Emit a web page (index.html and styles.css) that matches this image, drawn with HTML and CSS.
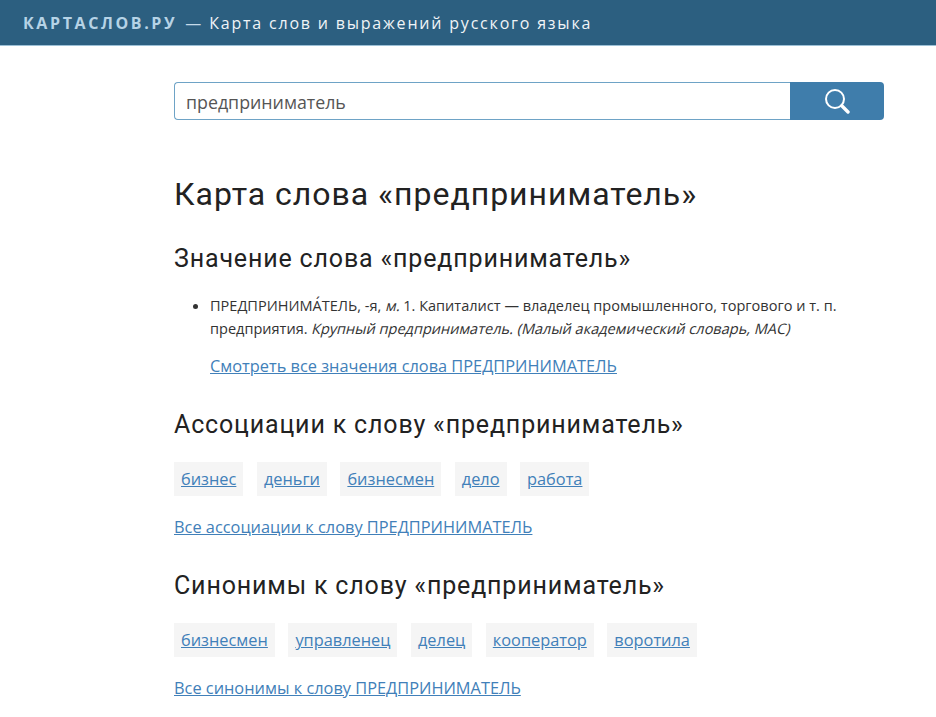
FILE: index.html
```html
<!DOCTYPE html>
<html lang="ru">
<head>
<meta charset="utf-8">
<title>Карта слова «предприниматель»</title>
<link rel="stylesheet" href="styles.css">
</head>
<body>
<header class="topbar">
  <a class="brand" href="#">КАРТАСЛОВ.РУ</a>
  <span class="dash">—</span>
  <span class="tagline">Карта слов и выражений русского языка</span>
</header>
<main class="content">
  <form class="search">
    <div class="search-input">предприниматель</div>
    <button class="search-btn" type="button" aria-label="Поиск">
      <svg class="search-icon" viewBox="0 0 26 26" width="26" height="26">
        <circle cx="11" cy="11" r="9" fill="none" stroke="#fff" stroke-width="2"/>
        <path d="M17.8 17.8 L24 24" fill="none" stroke="#fff" stroke-width="3.4" stroke-linecap="round"/>
      </svg>
    </button>
  </form>
  <h1 class="title">Карта слова «предприниматель»</h1>
  <section>
    <h2 class="heading first">Значение слова «предприниматель»</h2>
    <ul class="meanings">
      <li>ПРЕДПРИНИМА́ТЕЛЬ, -я, <span class="em">м.</span> 1. Капиталист — владелец промышленного, торгового и т. п. предприятия. <span class="em">Крупный предприниматель. (Малый академический словарь, МАС)</span></li>
    </ul>
    <a class="more indented" href="#">Смотреть все значения слова ПРЕДПРИНИМАТЕЛЬ</a>
  </section>
  <section>
    <h2 class="heading">Ассоциации к слову «предприниматель»</h2>
    <div class="tags">
      <a class="tag" href="#">бизнес</a><a class="tag" href="#">деньги</a><a class="tag" href="#">бизнесмен</a><a class="tag" href="#">дело</a><a class="tag" href="#">работа</a>
    </div>
    <a class="more" href="#">Все ассоциации к слову ПРЕДПРИНИМАТЕЛЬ</a>
  </section>
  <section>
    <h2 class="heading">Синонимы к слову «предприниматель»</h2>
    <div class="tags">
      <a class="tag" href="#">бизнесмен</a><a class="tag" href="#">управленец</a><a class="tag" href="#">делец</a><a class="tag" href="#">кооператор</a><a class="tag" href="#">воротила</a>
    </div>
    <a class="more" href="#">Все синонимы к слову ПРЕДПРИНИМАТЕЛЬ</a>
  </section>
</main>
</body>
</html>
```
FILE: styles.css
```css
html, body { margin: 0; padding: 0; }
body {
  font-family: "Open Sans", "Noto Sans", sans-serif;
  color: #222;
  background: #fff;
  overflow: hidden;
  height: 717px;
}
.topbar {
  height: 46px;
  box-sizing: border-box;
  background: #2c5f80;
  border-bottom: 1px solid #9cc0d6;
  padding: 1px 0 0 23px;
  display: flex;
  align-items: center;
  gap: 8px;
  font-size: 16px;
  color: #dfeaf2;
}
.brand { color: #b6d3e6; font-weight: 700; text-decoration: none; letter-spacing: 2.6px; }
.dash { color: #c5dae8; }
.tagline { color: #f0f4f7; letter-spacing: 1.8px; }
.content { padding: 36px 52px 0 174px; }
.search { display: flex; height: 38px; }
.search-input {
  flex: 1;
  box-sizing: border-box;
  border: 1px solid #6ea3c6;
  border-right: 0;
  border-radius: 4px 0 0 4px;
  padding-left: 11px;
  font-size: 17.8px;
  line-height: 39px;
  color: #555;
}
.search-btn {
  width: 94px;
  padding: 0;
  border: 0;
  border-radius: 0 4px 4px 0;
  background: #3f7dab;
  display: flex;
  align-items: center;
  justify-content: center;
}
.title {
  font-family: Roboto, sans-serif;
  font-weight: 400;
  font-size: 32px;
  line-height: 40px;
  letter-spacing: 0.98px;
  color: #222;
  margin: 54px 0 0;
}
.heading {
  font-family: Roboto, sans-serif;
  font-weight: 400;
  font-size: 25px;
  line-height: 30px;
  letter-spacing: 0.84px;
  color: #222;
  margin: 32px 0 0;
}
.heading.first { margin-top: 30px; }
.meanings { margin: 20px 0 0; padding: 0 0 0 36px; font-size: 14.54px; line-height: 23px; color: #333; }
.em { display: inline-block; transform: skewX(-14deg); transform-origin: 0 75%; }
.more { color: #4180b9; font-size: 16.35px; line-height: 24px; }
.more.indented { display: inline-block; margin: 14px 0 0 36px; }
.tags { display: flex; gap: 13.5px; margin: 22px 0 19px; }
.tag {
  background: #f5f5f5;
  color: #4180b9;
  font-size: 16.35px;
  line-height: 34px;
  padding: 0 7px;
}
```
